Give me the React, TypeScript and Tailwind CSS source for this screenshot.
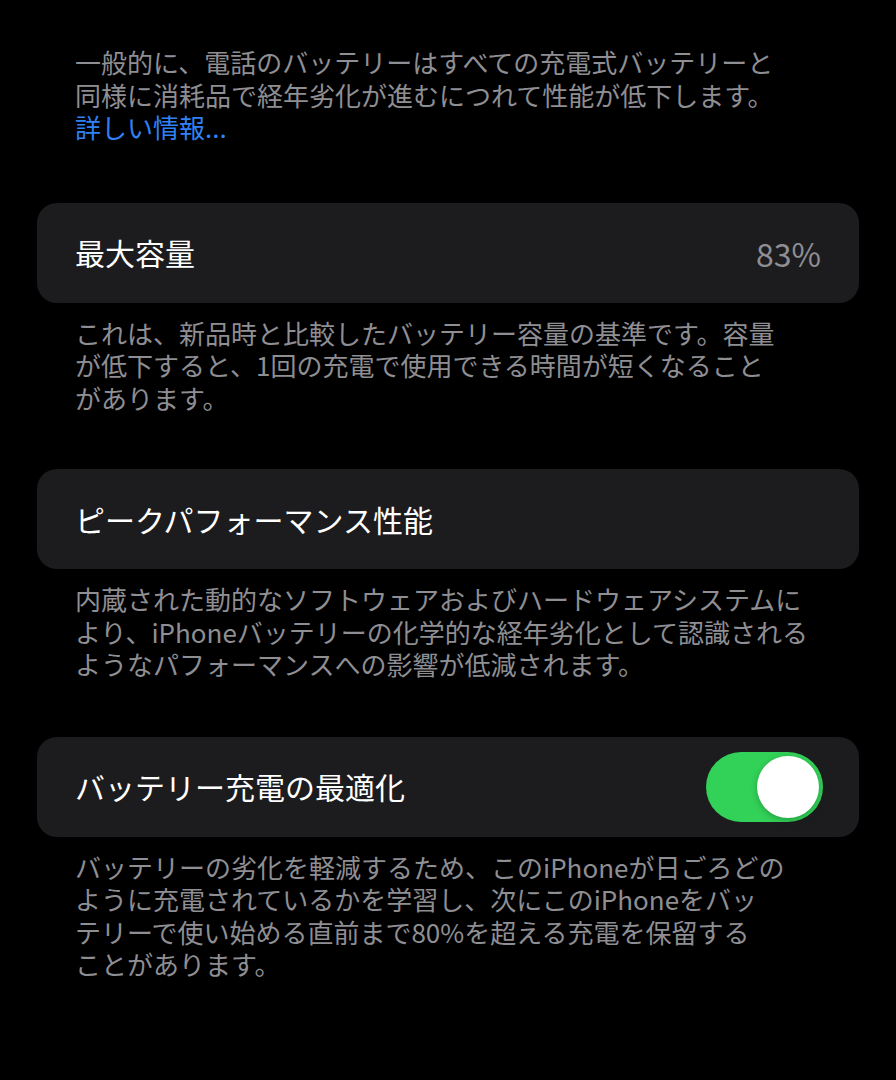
import React from "react";

const font = { fontFamily: '"Noto Sans CJK JP", "Noto Sans", sans-serif' };

function Footnote({ lines, className = "" }: { lines: string[]; className?: string }) {
  return (
    <div className={`pl-[75px] text-[26px] leading-[32.5px] text-[#8e8e93] whitespace-nowrap ${className}`}>
      {lines.map((l, i) => (
        <div key={i}>{l}</div>
      ))}
    </div>
  );
}

function Card({ children, className = "" }: { children: React.ReactNode; className?: string }) {
  return (
    <div
      className={`mx-[37px] h-[100px] rounded-[20px] bg-[#1c1c1e] pl-[38px] pr-[36px] flex items-center justify-between ${className}`}
    >
      {children}
    </div>
  );
}

export default function App() {
  return (
    <div className="w-[896px] h-[1080px] bg-black overflow-hidden" style={font}>
      <div className="pt-[46px]">
        <div className="pl-[75px] text-[26px] leading-[32.5px] text-[#8e8e93] whitespace-nowrap">
          <div>一般的に、電話のバッテリーはすべての充電式バッテリーと</div>
          <div>同様に消耗品で経年劣化が進むにつれて性能が低下します。</div>
          <div className="text-[#2f82f5]">詳しい情報...</div>
        </div>

        <Card className="mt-[59px]">
          <span className="text-[30px] text-white">最大容量</span>
          <span className="text-[32px] text-[#8e8e93] pr-[2px]">83%</span>
        </Card>
        <Footnote
          className="mt-[14px]"
          lines={[
            "これは、新品時と比較したバッテリー容量の基準です。容量",
            "が低下すると、1回の充電で使用できる時間が短くなること",
            "があります。",
          ]}
        />

        <Card className="mt-[55px]">
          <span className="text-[30px] text-white">ピークパフォーマンス性能</span>
        </Card>
        <Footnote
          className="mt-[14px]"
          lines={[
            "内蔵された動的なソフトウェアおよびハードウェアシステムに",
            "より、iPhoneバッテリーの化学的な経年劣化として認識される",
            "ようなパフォーマンスへの影響が低減されます。",
          ]}
        />

        <Card className="mt-[56px]">
          <span className="text-[30px] text-white">バッテリー充電の最適化</span>
          <div className="w-[117px] h-[70px] rounded-full bg-[#32d158] p-[4px] flex justify-end">
            <div className="w-[62px] h-[62px] rounded-full bg-white shadow-[0_2px_6px_rgba(0,0,0,0.25)]" />
          </div>
        </Card>
        <Footnote
          className="mt-[14px]"
          lines={[
            "バッテリーの劣化を軽減するため、このiPhoneが日ごろどの",
            "ように充電されているかを学習し、次にこのiPhoneをバッ",
            "テリーで使い始める直前まで80%を超える充電を保留する",
            "ことがあります。",
          ]}
        />
      </div>
    </div>
  );
}
